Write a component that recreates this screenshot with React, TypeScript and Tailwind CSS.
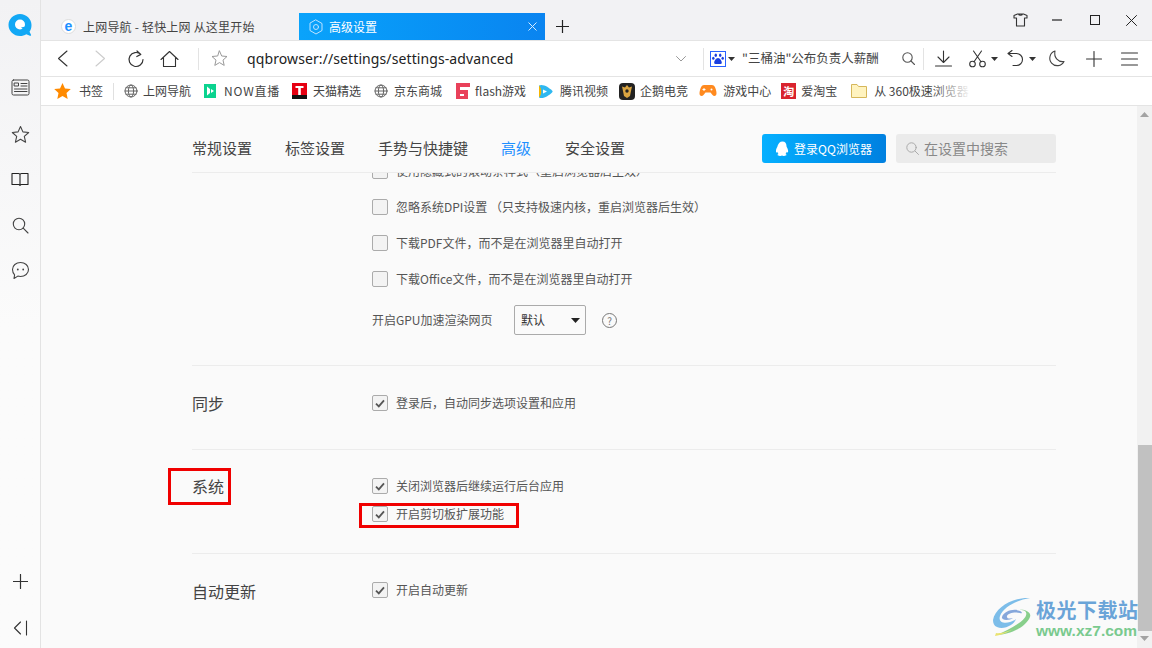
import React from "react";

const FONT = '"Noto Sans CJK SC","Noto Sans",sans-serif';

const Stroke = ({ w = 18, h = 18, vb = "0 0 18 18", c = "#444", sw = 1.2, children }: any) => (
  <svg width={w} height={h} viewBox={vb} fill="none" stroke={c} strokeWidth={sw} strokeLinecap="round" strokeLinejoin="round" className="shrink-0">
    {children}
  </svg>
);

const Globe = () => (
  <Stroke w={14} h={14} vb="0 0 14 14" c="#666" sw={1}>
    <circle cx="7" cy="7" r="6" />
    <ellipse cx="7" cy="7" rx="2.6" ry="6" />
    <path d="M1 7h12M2 3.8h10M2 10.2h10" />
  </Stroke>
);

const Caret = ({ cls = "" }: { cls?: string }) => (
  <svg width="7" height="4" viewBox="0 0 7 4" className={"shrink-0 " + cls}><path d="M0 0h7L3.500 4z" fill="#333" /></svg>
);

const Mark = ({ w, children }: any) => <div className={"flex items-center justify-center shrink-0 " + w}>{children}</div>;

const BM = ({ icon, label, ml, gap, lcls = "" }: any) => (
  <div className={"flex items-center shrink-0 whitespace-nowrap " + ml}>
    {icon}
    <span className={gap + " text-[12px] text-[#444] " + lcls}>{label}</span>
  </div>
);

const Check = ({ on }: { on?: boolean }) => (
  <span className="w-[16px] h-[16px] rounded-[2px] border border-[#ababab] bg-[#f3f3f3] flex items-center justify-center shrink-0">
    {on && (
      <svg width="10" height="9" viewBox="0 0 10 9" fill="none"><path d="M1 4.600 3.800 7.400 9 1.400" stroke="#555" strokeWidth="1.800" /></svg>
    )}
  </span>
);

const Row = ({ on, children, cls = "" }: any) => (
  <div className={"flex items-center gap-[8px] h-[20px] text-[12px] text-[#555] whitespace-nowrap " + cls}>
    <Check on={on} />
    <span>{children}</span>
  </div>
);

const Section = ({ title, titleCls = "", h, children, last }: any) => (
  <div className={"flex mr-[81px] " + h + (last ? "" : " border-b border-[#ececec]")}>
    <div className={"w-[180px] shrink-0 text-[16px] leading-[22px] text-[#444] " + titleCls}>{title}</div>
    <div className="flex-1">{children}</div>
  </div>
);

export default function App() {
  return (
    <div className="w-[1152px] h-[648px] flex overflow-hidden bg-white relative" style={{ fontFamily: FONT }}>
      {/* Left rail */}
      <aside className="w-[41px] shrink-0 border-r border-[#e3e3e3] bg-gradient-to-b from-[#f2f2f4] via-[#fbfbfb] to-[#fbfbfb] flex flex-col items-center">
        <svg width="24" height="24" viewBox="0 0 24 24" className="mt-[13px]">
          <path d="M12 1C5.600 1 .5 6 .5 12S5.600 23 12 23c2.400 0 4.600-.6 6.300-1.800l3.600 1.500c1 .3 1.500-.5 1-1.300l-1.400-2.600c1.100-1.800 2-3.600 2-6.800C23.500 6 18.400 1 12 1z" fill="#12a8f5" />
          <circle cx="12" cy="11.500" r="5" fill="#fff" />
          <path d="M13 14.500l5 4-.5-5z" fill="#12a8f5" />
        </svg>
        <div className="mt-[42px]">
          <Stroke w={19} h={17} vb="0 0 19 17" sw={1}>
            <rect x="1" y="1" width="17" height="15" rx="1.500" />
            <rect x="3.500" y="4" width="4" height="3" />
            <path d="M10 4.500h6M10 7h6M3.500 10h12.500M3.500 12.500h12.500" />
          </Stroke>
        </div>
        <div className="mt-[29px]">
          <Stroke w={19} h={19} vb="0 0 19 19" sw={1.100}>
            <path d="M9.500 1.500l2.400 5.400 5.800.6-4.400 3.900 1.300 5.800-5.100-3-5.100 3 1.300-5.800L1.300 7.500l5.800-.6z" />
          </Stroke>
        </div>
        <div className="mt-[28px]">
          <Stroke w={18} h={15} vb="0 0 18 15" c="#222" sw={1.100}>
            <path d="M1 1.500h6.500c.9 0 1.500.5 1.500 1.200 0-.7.6-1.200 1.500-1.200H17v11h-6.500c-.7 0-1.200.3-1.500.9-.3-.6-.8-.9-1.500-.9H1zM9 2.700v10.700" />
          </Stroke>
        </div>
        <div className="mt-[30px]">
          <Stroke w={17} h={17} vb="0 0 17 17" sw={1.100}>
            <circle cx="7" cy="7" r="5.700" />
            <path d="M11.200 11.200l4.800 4.800" />
          </Stroke>
        </div>
        <div className="mt-[27px]">
          <Stroke w={19} h={19} vb="0 0 19 19" sw={1.100}>
            <path d="M9.500 1.500c4.500 0 8 3 8 7s-3.500 7-8 7c-1 0-1.900-.1-2.700-.4L3 17.500l.6-3.700C2.300 12.500 1.500 10.600 1.500 8.500c0-4 3.500-7 8-7z" />
            <circle cx="6.800" cy="8.500" r=".9" fill="#444" stroke="none" />
            <circle cx="12.200" cy="8.500" r=".9" fill="#444" stroke="none" />
          </Stroke>
        </div>
        <div className="mt-auto mb-[31px]">
          <Stroke w={15} h={15} vb="0 0 15 15" c="#333" sw={1.200}><path d="M7.500.5v14M.5 7.500h14" /></Stroke>
        </div>
        <div className="mb-[12px]">
          <Stroke w={15} h={16} vb="0 0 15 16" c="#333" sw={1.100}><path d="M7.500 2 1.500 8l6 6M13.500 1v14" /></Stroke>
        </div>
      </aside>

      <main className="flex-1 min-w-0 flex flex-col">
        {/* Tab strip */}
        <div className="h-[40px] shrink-0 bg-[#f2f2f4] flex items-end relative">
          <div className="w-[258px] h-[27px] flex items-center pl-[20px] shrink-0">
            <svg width="15" height="15" viewBox="0 0 15 15">
              <circle cx="7.500" cy="7.500" r="7" fill="#fff" stroke="#dcdcdc" />
              <text x="7.500" y="11.800" textAnchor="middle" fontSize="14" fontWeight="700" fill="#1e90ff" fontFamily="Liberation Sans">e</text>
            </svg>
            <span className="ml-[7px] text-[12px] text-[#444] whitespace-nowrap tracking-[0.2px]">上网导航 - 轻快上网 从这里开始</span>
          </div>
          <div className="w-[246px] h-[27px] shrink-0 bg-gradient-to-r from-[#0aa3fb] to-[#0a84f0] flex items-center pl-[9px] pr-[8px] text-white">
            <Stroke w={16} h={16} vb="0 0 16 16" c="#bfe3ff" sw={1}>
              <path d="M8 1l6 3.500v7L8 15l-6-3.500v-7z" />
              <circle cx="8" cy="8" r="2.500" />
            </Stroke>
            <span className="ml-[5px] text-[12px]">高级设置</span>
            <svg width="9" height="9" viewBox="0 0 9 9" className="ml-auto"><path d="M.5.5l8 8M8.500.5l-8 8" stroke="#d5ecff" strokeWidth="1" /></svg>
          </div>
          <div className="ml-[11px] mb-[7px]">
            <Stroke w={13} h={13} vb="0 0 13 13" c="#222" sw={1.200}><path d="M6.500 0v13M0 6.500h13" /></Stroke>
          </div>
          <div className="ml-auto flex items-center h-[40px] self-start">
            <div className="mr-[24px]">
              <Stroke w={15} h={14} vb="0 0 15 14" c="#333" sw={1.100}>
                <path d="M4.500 1h6l3.500 1.500v2.500h-2.500v8h-8V5H1V2.500zM5.500 1c.4 1.600 3.600 1.600 4 0" />
              </Stroke>
            </div>
            <div className="mr-[28px]">
              <svg width="10" height="2" viewBox="0 0 10 2"><path d="M0 1h10" stroke="#222" strokeWidth="1.200" /></svg>
            </div>
            <div className="mr-[25px] w-[10px] h-[10px] border border-[#222]" />
            <div className="mr-[14px]">
              <Stroke w={13} h={13} vb="0 0 13 13" c="#222" sw={1}><path d="M1.500 1.500l10 10M11.500 1.500l-10 10" /></Stroke>
            </div>
          </div>
        </div>

        {/* Address bar */}
        <div className="h-[37px] shrink-0 bg-white border-t border-b border-[#e4e4e4] flex items-center">
          <Mark w="w-[12px] ml-[15px]"><Stroke w={11} h={17} vb="0 0 11 17" c="#333" sw={1.100}><path d="M10 1 1.500 8.500 10 16" /></Stroke></Mark>
          <Mark w="w-[12px] ml-[26px]"><Stroke w={11} h={17} vb="0 0 11 17" c="#ccc" sw={1.100}><path d="M1 1l8.500 7.500L1 16" /></Stroke></Mark>
          <Mark w="w-[18px] ml-[21px]">
            <Stroke w={18} h={18} c="#333" sw={1.200}><path d="M13.800 4.400A7 7 0 1 0 16 9.500M10 1l3.800 3.400L9.800 6.500" /></Stroke>
          </Mark>
          <Mark w="w-[20px] ml-[14px]">
            <Stroke w={19} h={18} vb="0 0 19 18" c="#333" sw={1.100}><path d="M1 9.500 9.500 1.500 18 9.500M3.500 8v8.500h12V8" /></Stroke>
          </Mark>
          <div className="w-px h-[22px] bg-[#e3e3e3] ml-[19px]" />
          <Mark w="w-[16px] ml-[12px]">
            <Stroke w={17} h={17} vb="0 0 17 17" c="#999" sw={1}><path d="M8.500 1l2.200 5 5.300.5-4 3.600 1.200 5.300-4.700-2.800-4.700 2.800 1.200-5.300-4-3.600 5.300-.5z" /></Stroke>
          </Mark>
          <span className="ml-[20px] text-[14px] text-[#222] whitespace-nowrap w-[429px] tracking-[0.1px]" style={{ fontFamily: '"Noto Sans",sans-serif' }}>qqbrowser://settings/settings-advanced</span>
          <Stroke w={10} h={6} vb="0 0 10 6" c="#999" sw={1}><path d="M.5.500 5 5 9.500.500" /></Stroke>
          <div className="w-px h-[22px] bg-[#e3e3e3] ml-[17px]" />
          <div className="ml-[6px] w-[16px] h-[16px] border border-[#2962ff] flex items-center justify-center shrink-0">
            <svg width="12" height="12" viewBox="0 0 12 12" fill="#1a3fe0">
              <ellipse cx="3.800" cy="2.200" rx="1.200" ry="1.700" /><ellipse cx="8.200" cy="2.200" rx="1.200" ry="1.700" />
              <ellipse cx="1.300" cy="5.300" rx="1.200" ry="1.500" /><ellipse cx="10.700" cy="5.300" rx="1.200" ry="1.500" />
              <path d="M6 5c2 0 3.800 3 3.800 4.700 0 1.700-2 1.500-3.800 1.200-1.800.3-3.800.5-3.800-1.200C2.200 8 4 5 6 5z" />
            </svg>
          </div>
          <Caret cls="ml-[2px]" />
          <span className="ml-[7px] w-[141px] text-[12.500px] text-[#444] whitespace-nowrap overflow-hidden">"三桶油"公布负责人薪酬</span>
          <div className="ml-[19px]"><Stroke w={13} h={13} vb="0 0 13 13" c="#555" sw={1.100}><circle cx="5.500" cy="5.500" r="4.700" /><path d="M9 9l3.500 3.500" /></Stroke></div>
          <div className="w-px h-[22px] bg-[#e3e3e3] ml-[8px]" />
          <div className="ml-[11px]"><Stroke w={17} h={17} vb="0 0 17 17" c="#333" sw={1.100}><path d="M8.500 1v11M3 7l5.500 5.500L14 7M.5 16h16" /></Stroke></div>
          <div className="ml-[17px]"><Stroke w={17} h={18} vb="0 0 17 18" c="#333" sw={1.100}><circle cx="3.500" cy="14" r="2.800" /><circle cx="13.500" cy="14" r="2.800" /><path d="M5 11.800 12.500 1M12 11.800 4.500 1" /></Stroke></div>
          <Caret cls="ml-[5px]" />
          <div className="ml-[9px]"><Stroke w={17} h={17} vb="0 0 17 17" c="#333" sw={1.100}><path d="M1 3.500h8.500a6 6 0 0 1 0 12H6M5 .5l-4 3 4 3" /></Stroke></div>
          <Caret cls="ml-[5px]" />
          <div className="ml-[12px]"><Stroke w={17} h={17} vb="0 0 17 17" c="#444" sw={1.100}><path d="M7 1a7.500 7.500 0 1 0 9 10.500C10.500 12.500 5.500 7.500 7 1z" /></Stroke></div>
          <div className="ml-[21px]"><Stroke w={16} h={16} vb="0 0 16 16" c="#333" sw={1.100}><path d="M8 .5v15M.5 8h15" /></Stroke></div>
          <div className="ml-[19px]"><Stroke w={17} h={14} vb="0 0 17 14" c="#333" sw={1.100}><path d="M.5 1h16M.5 7h16M.5 13h16" /></Stroke></div>
        </div>

        {/* Bookmarks */}
        <div className="h-[29px] shrink-0 bg-white border-b border-[#e4e4e4] flex items-center relative overflow-hidden">
          <svg width="17" height="16" viewBox="0 0 17 16" className="ml-[13px] shrink-0"><path d="M8.500 0l2.500 5.400 5.800.7-4.300 4 1.200 5.800-5.200-3-5.200 3 1.200-5.800-4.300-4 5.800-.7z" fill="#ff8a00" /></svg>
          <span className="ml-[8px] text-[12px] text-[#444] shrink-0">书签</span>
          <div className="w-px h-[17px] bg-[#e0e0e0] ml-[10px] shrink-0" />
          <BM ml="ml-[10px]" gap="ml-[5px]" icon={<Globe />} label="上网导航" />
          <BM ml="ml-[13px]" gap="ml-[8px]" lcls="tracking-[0.8px]" icon={<svg width="12" height="14" viewBox="0 0 12 14" className="shrink-0"><rect width="12" height="14" fill="#0bd38f" /><path d="M3 2.500v9l3-2.500V5zM7 5l3 2-3 2z" fill="#fff" /></svg>} label="NOW直播" />
          <BM ml="ml-[12px]" gap="ml-[6px]" icon={<svg width="15" height="16" viewBox="0 0 15 16" className="shrink-0"><rect width="15" height="12" fill="#e60012" /><rect y="12" width="15" height="4" fill="#111" /><path d="M3.500 3h8v2H8.800v7H6.200V5H3.500z" fill="#fff" /></svg>} label="天猫精选" />
          <BM ml="ml-[13px]" gap="ml-[6px]" icon={<Globe />} label="京东商城" />
          <BM ml="ml-[12px]" gap="ml-[5px]" icon={<svg width="16" height="17" viewBox="0 0 16 17" className="shrink-0"><path d="M2 0h14v4H6v3h8v9H2zM6 11v2h4v-2z" fill="#e9415a" fillRule="evenodd" /></svg>} label="flash游戏" />
          <BM ml="ml-[12px]" gap="ml-[7px]" icon={<svg width="15" height="15" viewBox="0 0 15 15" className="shrink-0"><path d="M1 1.500c4-2 10 2 13 5 .8.800.8 1.200 0 2-3 3-9 7-13 5z" fill="#2fb8f0" /><path d="M1 1.500c3 3 3 9 0 12 0-4 0-8 0-12z" fill="#f7b500" /><path d="M5 5.500l4 2-4 2z" fill="#fff" /></svg>} label="腾讯视频" />
          <BM ml="ml-[11px]" gap="ml-[5px]" icon={<svg width="16" height="17" viewBox="0 0 16 17" className="shrink-0"><rect width="16" height="17" rx="4" fill="#222" /><path d="M8 2l2 2.500 3-1-1 4.500-1 5-3 2-3-2-1-5-1-4.500 3 1z" fill="#d9a441" /><circle cx="8" cy="8" r="1.700" fill="#222" /></svg>} label="企鹅电竞" />
          <BM ml="ml-[11px]" gap="ml-[6px]" icon={<svg width="18" height="14" viewBox="0 0 18 14" className="shrink-0"><path d="M5 1h8c2.500 0 4 3.500 4.500 8 .3 3-2.500 4-4 2l-2-2.500h-5L4.500 11c-1.500 2-4.300 1-4-2C1 4.500 2.500 1 5 1z" fill="#ff8a1f" /><path d="M5 4v3M3.500 5.500h3" stroke="#fff" /><circle cx="12.500" cy="5.500" r="1" fill="#fff" /></svg>} label="游戏中心" />
          <BM ml="ml-[10px]" gap="ml-[5px]" icon={<span className="w-[15px] h-[16px] bg-[#d9232e] text-white text-[11px] leading-[16px] text-center font-bold shrink-0">淘</span>} label="爱淘宝" />
          <div className="flex items-center shrink-0 whitespace-nowrap ml-[14px]">
            <svg width="16" height="14" viewBox="0 0 16 14" className="shrink-0"><path d="M.5.500h5.500l1.500 2h8v11H.5z" fill="#fff3bf" stroke="#d6b75a" /></svg>
            <span className="ml-[7px] text-[12px] text-[#444]">从 360极速浏览器</span>
          </div>
          <div className="absolute left-[890px] top-0 w-[40px] h-full bg-gradient-to-r from-transparent to-white" />
          <div className="absolute left-[930px] top-0 w-[181px] h-full bg-white" />
        </div>

        {/* Body */}
        <div className="flex-1 min-h-0 flex bg-[#fafafa]">
          <div className="flex-1 min-w-0 flex flex-col pl-[151px]">
            <div className="h-[67px] shrink-0 mr-[81px] border-b border-[#ececec] flex items-center pt-[19px] text-[15px] text-[#444] whitespace-nowrap">
              <span>常规设置</span>
              <span className="ml-[33px]">标签设置</span>
              <span className="ml-[33px]">手势与快捷键</span>
              <span className="ml-[33px] text-[#1e90ff]">高级</span>
              <span className="ml-[34px]">安全设置</span>
              <button className="ml-auto w-[124px] h-[29px] rounded-[3px] bg-gradient-to-r from-[#06b0ff] to-[#0080e0] text-white text-[12px] flex items-center justify-center gap-[5px]">
                <svg width="13" height="16" viewBox="0 0 13 16"><path d="M6.500.5c2.700 0 4 2 4 4.500 0 1 .6 1.600 1 2.500.8 2 .8 3.800.2 4-.4.100-.8-.5-1-.8-.1 1-.6 1.700-1.200 2.200.8.300 1.200.7 1.100 1.200-.2.600-1.800.9-3 .8-.8-.1-1.200-.2-1.600-.4-.4 0-.8.300-1.600.4-1.200.1-2.800-.2-3-.8-.1-.5.300-.9 1.100-1.200-.6-.5-1.100-1.200-1.200-2.200-.2.300-.6.900-1 .8-.6-.2-.6-2 .2-4 .4-.9 1-1.500 1-2.500C2.500 2.500 3.800.5 6.500.5z" fill="#fff" /></svg>
                登录QQ浏览器
              </button>
              <div className="ml-[10px] w-[160px] h-[29px] rounded-[3px] bg-[#ebebeb] flex items-center pl-[10px] text-[14px] text-[#888]">
                <Stroke w={13} h={13} vb="0 0 13 13" c="#aaa" sw={1}><circle cx="5.500" cy="5.500" r="4.700" /><path d="M9 9l3.500 3.500" /></Stroke>
                <span className="ml-[5px]">在设置中搜索</span>
              </div>
            </div>
            <div className="flex-1 min-h-0 overflow-hidden">
              <div className="-mt-[12px]">
                <Section h="h-[205px]" title="">
                  <Row cls="mb-[16px]">使用隐藏式的滚动条样式（重启浏览器后生效）</Row>
                  <Row cls="mb-[16px]">忽略系统DPI设置 （只支持极速内核，重启浏览器后生效）</Row>
                  <Row cls="mb-[16px]">下载PDF文件，而不是在浏览器里自动打开</Row>
                  <Row>下载Office文件，而不是在浏览器里自动打开</Row>
                  <div className="flex items-center text-[12px] text-[#555] mt-[16px]">
                    <span className="w-[142px] whitespace-nowrap">开启GPU加速渲染网页</span>
                    <div className="w-[72px] h-[30px] rounded-[2px] border border-[#aaa] bg-[#fafafa] flex items-center pl-[6px] pr-[5px] text-[#333]">
                      默认
                      <svg width="9" height="5" viewBox="0 0 9 5" className="ml-auto"><path d="M0 0h9L4.500 5z" fill="#222" /></svg>
                    </div>
                    <span className="ml-[16px] w-[15px] h-[15px] rounded-full border border-[#777] text-[#777] text-[10px] leading-[13px] text-center">?</span>
                  </div>
                </Section>
                <Section h="h-[84px] pt-[27px]" titleCls="-mt-[1px]" title="同步">
                  <Row on>登录后，自动同步选项设置和应用</Row>
                </Section>
                <Section h="h-[104px] pt-[26px]" titleCls="-mt-[1px]" title="系统">
                  <Row on>关闭浏览器后继续运行后台应用</Row>
                  <Row on cls="mt-[8px]">开启剪切板扩展功能</Row>
                </Section>
                <Section last h="h-[72px] pt-[26px]" title="自动更新">
                  <Row on>开启自动更新</Row>
                </Section>
              </div>
            </div>
          </div>
          {/* Scrollbar */}
          <div className="w-[15px] shrink-0 bg-[#f1f1f1] flex flex-col items-center">
            <svg width="9" height="5" viewBox="0 0 9 5" className="mt-[6px]"><path d="M0 5h9L4.500 0z" fill="#a3a3a3" /></svg>
            <div className="w-[14px] h-[186px] bg-[#c1c1c1] mt-[328px]" />
            <svg width="9" height="5" viewBox="0 0 9 5" className="mt-[5px]"><path d="M0 0h9L4.500 5z" fill="#a3a3a3" /></svg>
          </div>
        </div>
      </main>

      {/* Annotation boxes */}
      <div className="absolute left-[168px] top-[468px] w-[63px] h-[37px] border-[3px] border-[#f00000]" />
      <div className="absolute left-[359px] top-[503px] w-[160px] h-[25px] border-[3px] border-[#f00000]" />

      {/* Watermark */}
      <div className="absolute left-[992px] top-[596px] w-[150px] h-[46px] opacity-90">
        <svg width="44" height="42" viewBox="0 0 44 42" className="absolute left-0 top-0">
          <path d="M1 24C3 12 20 1 38 2 26 4 12 10 8 20c-2 6 4 8 10 6 4-1 6-3 6-3-2 6-12 11-19 8C2 30 1 27 1 24z" fill="#6fb7e8" />
          <path d="M10 21c2-6 12-9 18-6 3 1.500 2 3 0 2-5-1.500-12 0-13 3-.8 2.500 3 3 6 2-3 2.500-12 3-11-1z" fill="#7a9fd8" />
          <path d="M4 39c14 0 30-8 34-18 2-6-8-8-10-7 10 0 7 8-1 13-7 5-15 9-23 12z" fill="#7ccb80" />
          <path d="M3 40c6-1 14-4 20-8-5 3-14 6-19 5z" fill="#e8e060" />
        </svg>
        <div className="absolute left-[44px] top-[2px] text-[20px] leading-[24px] font-bold text-[#5b9bd5] whitespace-nowrap tracking-[0.5px]">极光下载站</div>
        <div className="absolute left-[44px] top-[26px] text-[15.500px] leading-[18px] font-semibold text-[#6cc583] whitespace-nowrap" style={{ fontFamily: '"Liberation Sans",sans-serif' }}>www.xz7.com</div>
      </div>
    </div>
  );
}
